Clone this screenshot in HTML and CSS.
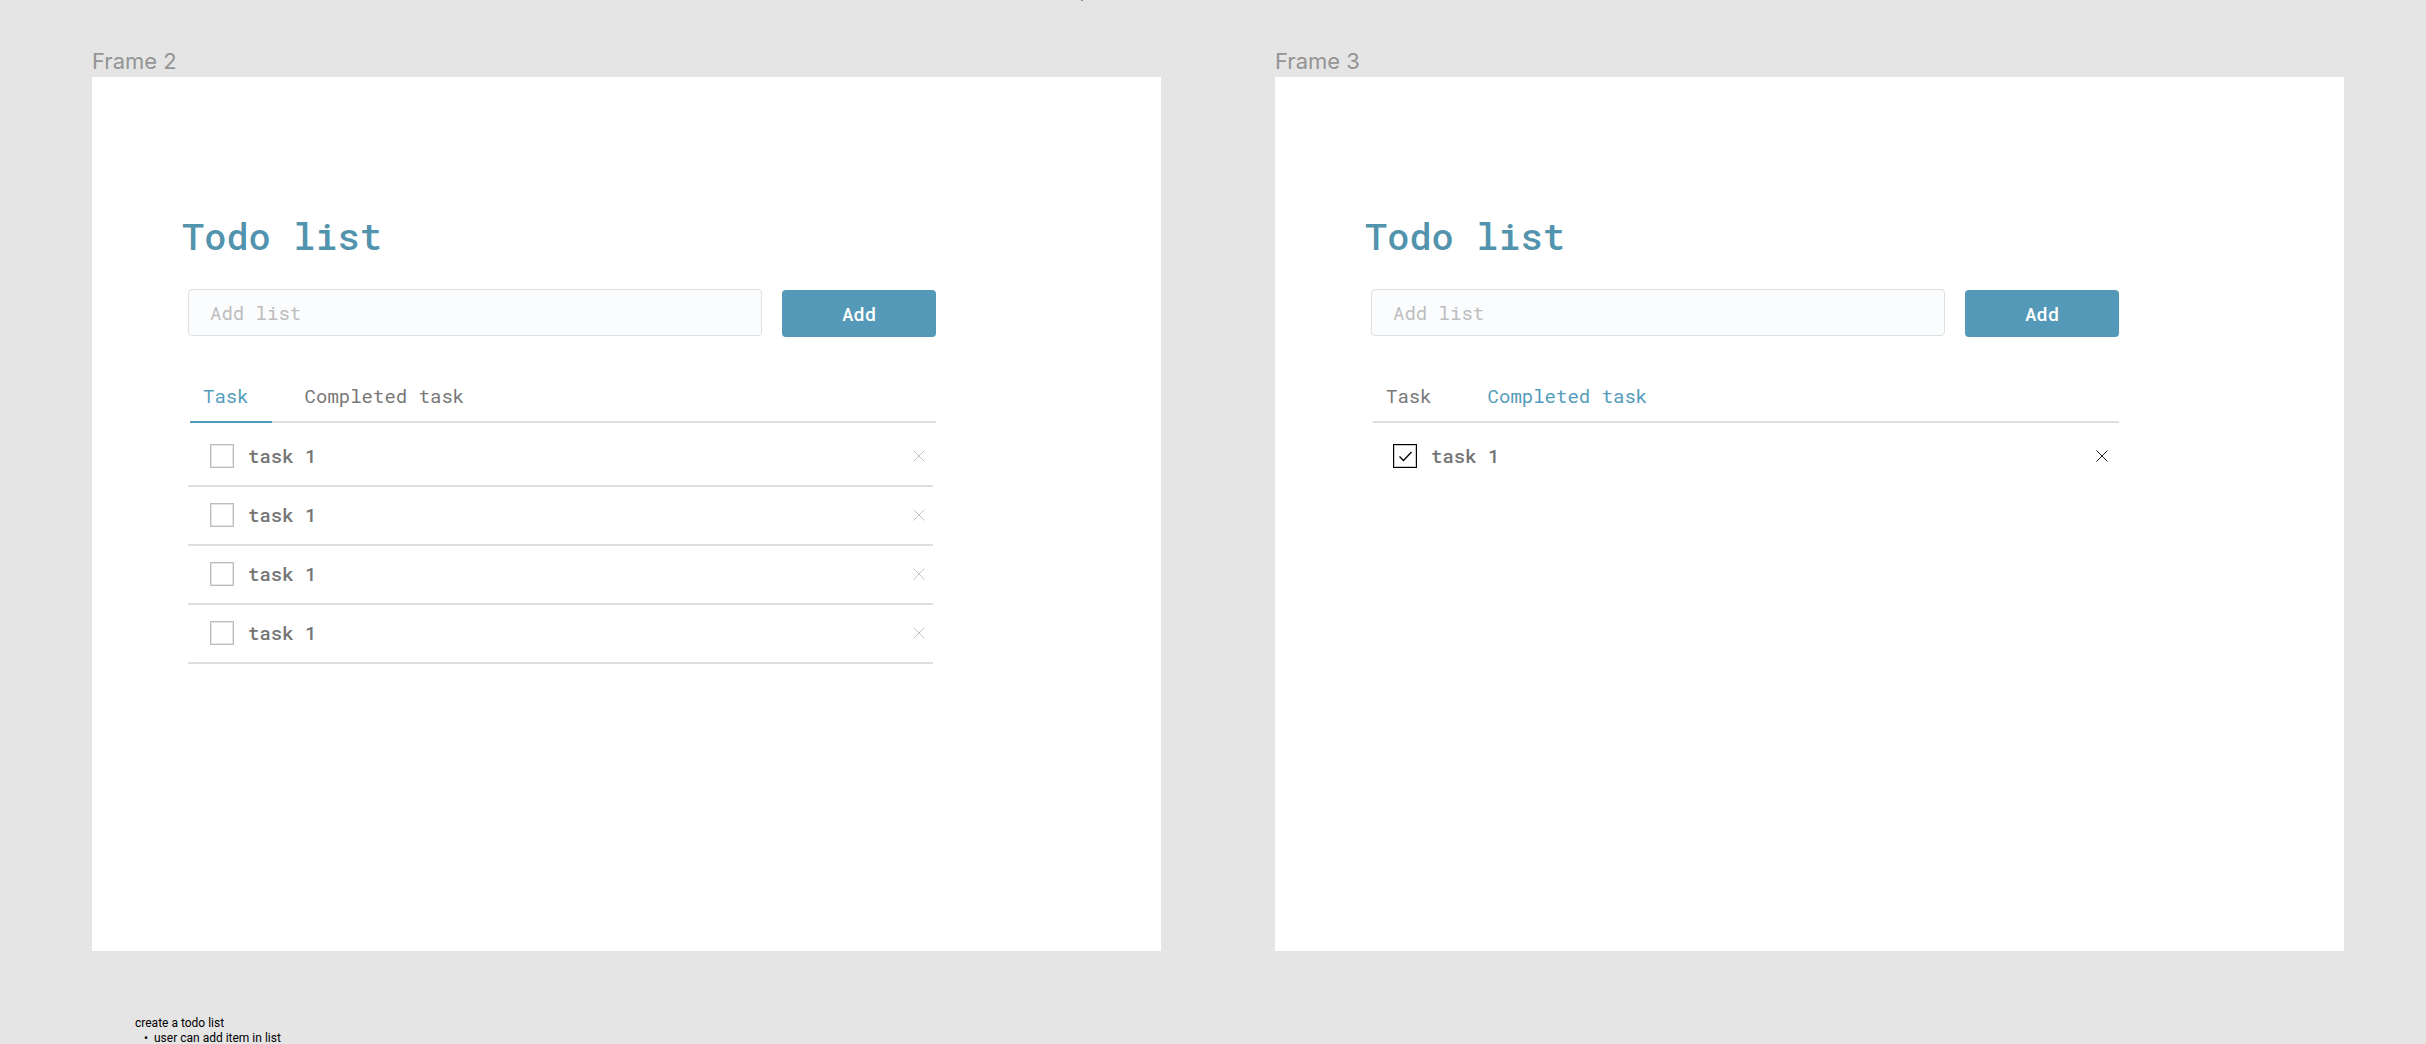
FILE: index.html
```html
<!DOCTYPE html>
<html lang="en">
<head>
  <meta charset="utf-8">
  <meta name="viewport" content="width=device-width, initial-scale=1">
  <title>Todo list</title>
  <link rel="stylesheet" href="styles.css">
</head>
<body>
  <span class="speck"></span>
  <main class="board">
    <section class="frame">
      <p class="frame-name">Frame 2</p>
      <div class="screen">
        <h1 class="title">Todo list</h1>
        <div class="app">
          <form class="add-form">
            <input class="add-input" type="text" placeholder="Add list" aria-label="Add list">
            <button class="add-button" type="button">Add</button>
          </form>
          <div class="tabs" role="tablist">
            <button class="tab tab-active tab-underlined" type="button" role="tab" aria-selected="true">Task</button>
            <button class="tab" type="button" role="tab" aria-selected="false">Completed task</button>
          </div>
          <ul class="tasks">
            <li class="task">
              <label class="task-label"><input class="check" type="checkbox"><span>task 1</span></label>
              <button class="remove" type="button" aria-label="Remove"><svg class="cross" viewBox="0 0 12 12"><path d="M.5.5l11 11M11.5.5l-11 11"/></svg></button>
            </li>
            <li class="task">
              <label class="task-label"><input class="check" type="checkbox"><span>task 1</span></label>
              <button class="remove" type="button" aria-label="Remove"><svg class="cross" viewBox="0 0 12 12"><path d="M.5.5l11 11M11.5.5l-11 11"/></svg></button>
            </li>
            <li class="task">
              <label class="task-label"><input class="check" type="checkbox"><span>task 1</span></label>
              <button class="remove" type="button" aria-label="Remove"><svg class="cross" viewBox="0 0 12 12"><path d="M.5.5l11 11M11.5.5l-11 11"/></svg></button>
            </li>
            <li class="task">
              <label class="task-label"><input class="check" type="checkbox"><span>task 1</span></label>
              <button class="remove" type="button" aria-label="Remove"><svg class="cross" viewBox="0 0 12 12"><path d="M.5.5l11 11M11.5.5l-11 11"/></svg></button>
            </li>
          </ul>
        </div>
      </div>
    </section>

    <section class="frame">
      <p class="frame-name">Frame 3</p>
      <div class="screen">
        <h1 class="title">Todo list</h1>
        <div class="app">
          <form class="add-form">
            <input class="add-input" type="text" placeholder="Add list" aria-label="Add list">
            <button class="add-button" type="button">Add</button>
          </form>
          <div class="tabs" role="tablist">
            <button class="tab" type="button" role="tab" aria-selected="false">Task</button>
            <button class="tab tab-active" type="button" role="tab" aria-selected="true">Completed task</button>
          </div>
          <ul class="tasks">
            <li class="task task-done">
              <label class="task-label">
                <span class="check-box"><input class="check" type="checkbox" checked><svg class="tick" viewBox="0 0 24 24"><path d="M6.5 12.5l4 4 8-8.5"/></svg></span><span>task 1</span>
              </label>
              <button class="remove" type="button" aria-label="Remove"><svg class="cross" viewBox="0 0 12 12"><path d="M.5.5l11 11M11.5.5l-11 11"/></svg></button>
            </li>
          </ul>
        </div>
      </div>
    </section>
  </main>

  <aside class="notes">
    <p class="notes-title">create a todo list</p>
    <ul class="notes-list">
      <li>user can add item in list</li>
    </ul>
  </aside>
</body>
</html>
```
FILE: styles.css
```css
* {
  box-sizing: border-box;
}

body {
  margin: 0;
  padding-top: 45px;
  background: #e5e5e5;
  font-family: "Roboto Mono", "DejaVu Sans Mono", monospace;
  font-size: 19px;
  line-height: 24px;
  color: #757575;
}

h1, p, ul {
  margin: 0;
  padding: 0;
}

ul {
  list-style: none;
}

button, input {
  margin: 0;
  font: inherit;
}

button {
  border: 0;
  background: none;
  cursor: pointer;
}

/* Lower edge of a canvas item that lies above the view */
.speck {
  position: absolute;
  top: 0;
  left: 1081px;
  width: 2px;
  height: 1px;
  background: #8c8c8c;
}

.board {
  display: grid;
  grid-template-columns: 1fr 1fr;
  gap: 114px;
  padding: 0 82px 0 92px;
}

.frame-name {
  font-family: Inter, sans-serif;
  font-size: 22px;
  line-height: 32px;
  color: #949494;
}

.screen {
  min-height: 874px;
  padding: 137px 90px 0;
  background: #fff;
}

.title {
  font-size: 37px;
  line-height: 44px;
  font-weight: 500;
  color: #5293ae;
}

.app {
  max-width: 754px;
  padding: 31px 0 0 6px;
}

.add-form {
  display: flex;
  gap: 20px;
  height: 48px;
}

.add-input {
  flex: 1;
  min-width: 0;
  height: 47px;
  padding: 0 21px;
  border: 1px solid #e0e0e0;
  border-radius: 4px;
  background: #fbfcfe;
  color: #757575;
}

.add-input::placeholder {
  color: #bdbdbd;
  opacity: 1;
}

.add-button {
  align-self: flex-end;
  width: 154px;
  height: 47px;
  border-radius: 4px;
  background: #5499b8;
  color: #fff;
  font-weight: 500;
}

.tabs {
  display: flex;
  gap: 20px;
  margin: 47px 0 0 2px;
  border-bottom: 2px solid #dedede;
}

.tab {
  margin-bottom: -2px;
  padding: 0 23px 13px 13px;
  border-bottom: 2px solid transparent;
  color: #787878;
  font-weight: 450;
}

.tab-active {
  color: #549cbb;
}

.tab-underlined {
  border-bottom-color: #549cbb;
}

.tasks {
  padding: 5px 3px 0 0;
}

.task {
  display: flex;
  align-items: center;
  justify-content: space-between;
  height: 59px;
  padding: 0 8px 2px 22px;
  border-bottom: 2px solid #dedede;
}

.task-done {
  border-bottom-color: transparent;
}

.task-label {
  display: flex;
  align-items: center;
  gap: 14px;
  font-weight: 500;
}

.check {
  appearance: none;
  width: 24px;
  height: 24px;
  border: 1px solid #bdbdbd;
  background: #fff;
  box-shadow: inset 0 0 0 1px #e4e4e4;
}

.check:checked {
  border-color: #000;
  box-shadow: inset 0 0 0 1px #c8c8c8;
}

.check-box {
  display: grid;
}

.check-box > * {
  grid-area: 1 / 1;
}

.tick {
  width: 24px;
  height: 24px;
  fill: none;
  stroke: #000;
  stroke-width: 1.3;
  pointer-events: none;
}

.remove {
  display: flex;
  padding: 0;
}

.cross {
  width: 12px;
  height: 12px;
  stroke: #c4c4c4;
  stroke-width: 1;
}

.task-done .cross {
  stroke: #222;
}

.notes {
  padding: 65px 135px 0;
  font-family: Roboto, sans-serif;
  font-size: 12px;
  line-height: 15px;
  color: #000;
}

.notes-list {
  padding-left: 19px;
  list-style: disc;
}

.notes-list li::marker {
  content: "•  ";
}
```
